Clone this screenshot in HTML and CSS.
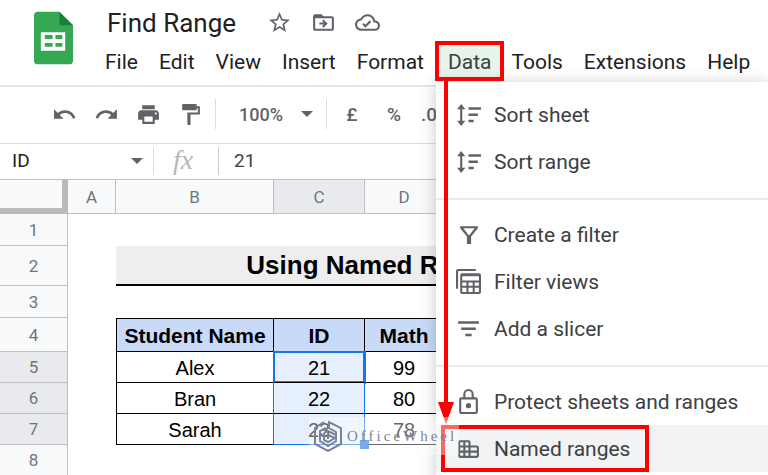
FILE: index.html
```html
<!DOCTYPE html>
<html lang="en">
<head>
    <meta charset="UTF-8">
    <meta name="viewport" content="width=device-width, initial-scale=1.0">
    <title>Find Range</title>
    <link rel="stylesheet" href="styles.css">
</head>
<body>
    <header class="header">
        <svg class="logo" viewBox="0 0 40 54">
            <path fill="#34a853" d="M4 0h22l14 14v36a4 4 0 0 1-4 4H4a4 4 0 0 1-4-4V4a4 4 0 0 1 4-4z"/>
            <path fill="#188038" d="M26 0l14 14H26z"/>
            <path fill="#fff" fill-rule="evenodd" d="M7 21h25v19H7zM11 24v4h8v-4zM22 24v4h7v-4zM11 32v4h8v-4zM22 32v4h7v-4z"/>
        </svg>
        <div class="header-main">
            <div class="title-row">
                <h1 class="doc-title">Find Range</h1>
                <button class="icon-button" aria-label="Star">
                    <svg class="icon" viewBox="0 0 24 24"><path d="M22 9.24l-7.19-.62L12 2 9.19 8.63 2 9.24l5.46 4.73L5.82 21 12 17.27 18.18 21l-1.63-7.03L22 9.24zM12 15.4l-3.76 2.27 1-4.28-3.32-2.88 4.38-.38L12 6.1l1.71 4.04 4.38.38-3.32 2.88 1 4.28L12 15.4z"/></svg>
                </button>
                <button class="icon-button" aria-label="Move">
                    <svg class="icon" viewBox="0 0 24 24"><path d="M20 6h-8l-2-2H4c-1.1 0-2 .9-2 2v12c0 1.1.9 2 2 2h16c1.1 0 2-.9 2-2V8c0-1.1-.9-2-2-2zm0 12H4V8h16v10zm-8-1l4-4-4-4-1.4 1.4 1.6 1.6H8v2h4.200l-1.600 1.600z"/></svg>
                </button>
                <button class="icon-button" aria-label="See document status">
                    <svg class="icon" viewBox="0 0 24 24"><path d="M19.350 10.040C18.670 6.590 15.640 4 12 4 9.110 4 6.600 5.640 5.350 8.040 2.340 8.360 0 10.910 0 14c0 3.310 2.690 6 6 6h13c2.760 0 5-2.240 5-5 0-2.640-2.050-4.780-4.650-4.960zM19 18H6c-2.210 0-4-1.790-4-4 0-2.050 1.530-3.760 3.560-3.970l1.070-.110.5-.950C8.080 7.140 9.940 6 12 6c2.620 0 4.880 1.860 5.390 4.430l.3 1.500 1.530.110c1.560.1 2.780 1.410 2.780 2.960 0 1.650-1.350 3-3 3zm-9-3.820l-1.590-1.590L7 14l3 3 5.500-5.500-1.410-1.410z"/></svg>
                </button>
            </div>
            <nav class="menubar">
                <button class="menu-button">File</button>
                <button class="menu-button">Edit</button>
                <button class="menu-button">View</button>
                <button class="menu-button">Insert</button>
                <button class="menu-button">Format</button>
                <div class="menu-open">
                    <button class="menu-button active">Data</button>
                    <div class="dropdown">
                        <button class="dropdown-item">
                            <svg class="item-icon" viewBox="0 0 24 24"><path d="M5 2L1 7h3v11H1l4 5 4-5H6V7h3zM12 5h12v2.500H12zM12 11h9v2.500h-9zM12 17h5v2.500h-5z"/></svg>
                            Sort sheet
                        </button>
                        <button class="dropdown-item">
                            <svg class="item-icon" viewBox="0 0 24 24"><path d="M5 2L1 7h3v11H1l4 5 4-5H6V7h3zM12 5h12v2.500H12zM12 11h9v2.500h-9zM12 17h5v2.500h-5z"/></svg>
                            Sort range
                        </button>
                        <hr class="dropdown-line">
                        <button class="dropdown-item">
                            <svg class="item-icon" viewBox="0 0 24 24"><path fill-rule="evenodd" d="M4 4h17v2l-6.500 8v7h-4v-7L4 6zM7 6l5.500 7L18 6z"/></svg>
                            Create a filter
                        </button>
                        <button class="dropdown-item">
                            <svg class="item-icon" viewBox="0 0 24 24"><path fill-rule="evenodd" d="M0 2a2 2 0 0 1 2-2h17v2H2v17H0zM4 6a2 2 0 0 1 2-2h16a2 2 0 0 1 2 2v16a2 2 0 0 1-2 2H6a2 2 0 0 1-2-2zM6 7v4h16V7zM6 13v3h4v-3zM12 13v3h4v-3zM18 13v3h4v-3zM6 18v4h4v-4zM12 18v4h4v-4zM18 18v4h4v-4z"/></svg>
                            Filter views
                        </button>
                        <button class="dropdown-item">
                            <svg class="item-icon" viewBox="0 0 24 24"><path d="M2 5h20v2.500H2zM5 11h14v2.500H5zM9 17h6v2.500H9z"/></svg>
                            Add a slicer
                        </button>
                        <hr class="dropdown-line">
                        <button class="dropdown-item">
                            <svg class="item-icon" viewBox="0 0 24 24"><path fill-rule="evenodd" d="M7 8V5a5 5 0 0 1 10 0v3h2a2 2 0 0 1 2 2v12a2 2 0 0 1-2 2H5a2 2 0 0 1-2-2V10a2 2 0 0 1 2-2zM9 8h6V5a3 3 0 0 0-6 0zM5 10v12h14V10z"/><circle cx="12" cy="16" r="2.500"/></svg>
                            Protect sheets and ranges
                        </button>
                        <button class="dropdown-item hover">
                            <svg class="item-icon" viewBox="0 0 24 24"><path fill-rule="evenodd" d="M4 4h8a2 2 0 0 1 2 2v3h6a2 2 0 0 1 2 2v8a2 2 0 0 1-2 2H4a2 2 0 0 1-2-2V6a2 2 0 0 1 2-2zM4 6v3h3V6zM9 6v3h3V6zM4 11v3h3v-3zM9 11v3h3v-3zM14 11v3h6v-3zM4 16v3h3v-3zM9 16v3h3v-3zM14 16v3h6v-3z"/></svg>
                            Named ranges
                        </button>
                        <div class="item-mark"></div>
                    </div>
                    <svg class="arrow" viewBox="0 0 16 344"><path fill="#f00" d="M6 0h4v322h6l-8 22-8-22h6z"/></svg>
                </div>
                <button class="menu-button">Tools</button>
                <button class="menu-button">Extensions</button>
                <button class="menu-button">Help</button>
            </nav>
        </div>
    </header>

    <div class="toolbar">
        <button class="tool" aria-label="Undo"><svg class="icon" viewBox="0 0 24 24"><path d="M12.500 8c-2.650 0-5.050.990-6.900 2.600L2 7v9h9l-3.620-3.620c1.390-1.160 3.160-1.880 5.120-1.880 3.540 0 6.550 2.310 7.600 5.500l2.370-.780C21.080 11.030 17.150 8 12.500 8z"/></svg></button>
        <button class="tool" aria-label="Redo"><svg class="icon" viewBox="0 0 24 24"><path d="M18.400 10.600C16.550 8.990 14.150 8 11.500 8c-4.650 0-8.580 3.030-9.960 7.220L3.900 16c1.050-3.190 4.050-5.500 7.600-5.500 1.950 0 3.730.720 5.120 1.880L13 16h9V7l-3.600 3.600z"/></svg></button>
        <button class="tool" aria-label="Print"><svg class="icon" viewBox="0 0 24 24"><path d="M19 8H5c-1.660 0-3 1.340-3 3v6h4v4h12v-4h4v-6c0-1.660-1.340-3-3-3zm-3 11H8v-5h8v5zm3-7c-.550 0-1-.450-1-1s.450-1 1-1 1 .450 1 1-.450 1-1 1zM18 3H6v4h12V3z"/></svg></button>
        <button class="tool" aria-label="Paint format"><svg class="icon" viewBox="0 0 24 24"><path d="M18 4V3c0-.550-.450-1-1-1H5c-.550 0-1 .450-1 1v4c0 .550.450 1 1 1h12c.550 0 1-.450 1-1V6h1v4H9v11c0 .550.450 1 1 1h2V12h9V4h-3z"/></svg></button>
        <span class="tool-line"></span>
        <button class="zoom">100%<span class="caret"></span></button>
        <span class="tool-line"></span>
        <button class="tool tool-text">£</button>
        <button class="tool tool-text">%</button>
        <button class="tool-text decimal">.0</button>
    </div>

    <div class="formula-bar">
        <button class="name-box">ID<span class="caret"></span></button>
        <span class="fx">fx</span>
        <input class="formula" type="text" value="21" aria-label="Formula">
    </div>

    <main class="sheet">
        <table class="grid">
            <colgroup>
                <col class="col-num"><col class="col-a"><col class="col-b"><col class="col-c"><col class="col-d"><col class="col-e"><col class="col-e"><col>
            </colgroup>
            <tr class="letters">
                <th class="corner"></th><th>A</th><th>B</th><th class="picked">C</th><th>D</th><th></th><th></th><th></th>
            </tr>
            <tr class="row"><th>1</th><td></td><td></td><td></td><td></td></tr>
            <tr class="row-title"><th>2</th><td></td><td class="sheet-title" colspan="5">Using Named Ranges</td></tr>
            <tr class="row"><th>3</th><td></td><td></td><td></td><td></td></tr>
            <tr class="row-head"><th>4</th><td></td><td class="head">Student Name</td><td class="head">ID</td><td class="head">Math</td></tr>
            <tr class="row-data"><th class="picked">5</th><td></td><td class="cell">Alex</td><td class="cell selected current">21</td><td class="cell">99</td></tr>
            <tr class="row-data"><th class="picked">6</th><td></td><td class="cell">Bran</td><td class="cell selected">22</td><td class="cell">80</td></tr>
            <tr class="row-data"><th class="picked">7</th><td></td><td class="cell">Sarah</td><td class="cell selected last">23<span class="handle"></span></td><td class="cell">78</td></tr>
            <tr class="row-data"><th>8</th><td></td><td></td><td></td><td></td></tr>
        </table>
        <div class="watermark">
            <svg class="watermark-logo" viewBox="0 0 28 32" fill="none" stroke="#7b8296" stroke-width="2">
                <path d="M10 2L1 8v16l13 7 13-7V8L15 2v6l7 4v9l-8 5-8-5V11l6-3M10 13l4-2 8 4M10 13v7l4 2 7-4-7-3v4"/>
            </svg>
            <span>OfficeWheel</span>
        </div>
    </main>
</body>
</html>
```
FILE: styles.css
```css
* {
    box-sizing: border-box;
}

body {
    margin: 0;
    font-family: Roboto, Arial, sans-serif;
    color: #202124;
    background: #fff;
    overflow: hidden;
}

button {
    border: none;
    background: none;
    padding: 0;
    margin: 0;
    font-family: inherit;
    color: inherit;
    cursor: pointer;
}

.icon {
    display: block;
    width: 25px;
    height: 25px;
    fill: #5f6368;
}

/* header */
.header {
    display: flex;
    height: 87px;
    padding-left: 34px;
    border-bottom: 2px solid #e4e5e9;
}
.logo {
    width: 39px;
    height: 54px;
    margin-top: 11px;
    flex: none;
}
.header-main {
    margin-left: 22px;
}
.title-row {
    display: flex;
    align-items: center;
    height: 41px;
    padding: 4px 0 0 12px;
}
.doc-title {
    margin: 0 12px 0 0;
    font-size: 26px;
    font-weight: 400;
}
.icon-button {
    margin-left: 19px;
}
.menubar {
    display: flex;
    gap: 1px;
    height: 40px;
}
.menu-button {
    height: 40px;
    padding: 2px 10px 0;
    font-size: 21px;
    white-space: nowrap;
}
.menu-button.active {
    padding: 2px 9px 0;
    border: 4px solid #f00;
    background: #e6f4ea;
    color: #3c4043;
}

/* data menu */
.menu-open {
    position: relative;
    margin-right: -4px;
}
.dropdown {
    position: absolute;
    z-index: 2;
    top: 41px;
    left: 1px;
    width: 332px;
    padding: 9px 0;
    background: #fff;
    box-shadow: 0 2px 14px rgba(60, 64, 67, 0.3);
}
.dropdown-item {
    display: flex;
    align-items: center;
    gap: 13px;
    width: 100%;
    height: 47px;
    padding-left: 20px;
    font-size: 21px;
    color: #3c4043;
    white-space: nowrap;
}
.dropdown-item.hover {
    background: #f1f3f4;
}
.item-icon {
    width: 25px;
    height: 25px;
    fill: #5f6368;
}
.dropdown-line {
    height: 2px;
    margin: 13px 0 11px;
    border: none;
    background: #e8eaed;
}
.item-mark {
    position: absolute;
    bottom: 9px;
    left: 5px;
    width: 208px;
    height: 47px;
    border: 4px solid #f00;
}
.arrow {
    position: absolute;
    z-index: 3;
    top: 39px;
    left: 3px;
    width: 16px;
    height: 344px;
}

/* toolbar */
.toolbar {
    display: flex;
    align-items: center;
    height: 57px;
    padding: 0 0 2px 43px;
    border-bottom: 1px solid #dadce0;
    color: #5f6368;
}
.tool {
    display: flex;
    justify-content: center;
    width: 42px;
}
.tool-line {
    width: 1px;
    height: 30px;
    margin: 0 4px;
    background: #dadce0;
}
.zoom {
    display: flex;
    align-items: center;
    gap: 18px;
    padding: 0 9px 0 19px;
    font-size: 18px;
    font-weight: 500;
}
.caret {
    border: 6px solid transparent;
    border-top-color: #5f6368;
    border-bottom: none;
}
.tool-text {
    font-size: 19px;
    font-weight: 500;
}
.decimal {
    margin-left: 6px;
}

/* formula bar */
.formula-bar {
    display: flex;
    align-items: center;
    height: 35px;
    padding-bottom: 2px;
}
.name-box {
    display: flex;
    align-items: center;
    justify-content: space-between;
    width: 154px;
    height: 28px;
    padding: 0 10px 0 12px;
    border-right: 1px solid #dadce0;
    font-size: 19px;
}
.fx {
    width: 65px;
    height: 28px;
    padding-left: 19px;
    border-right: 1px solid #c8cacd;
    font: italic 28px/26px "Liberation Serif", serif;
    color: #b8b8b8;
}
.formula {
    flex: 1;
    min-width: 0;
    padding: 0 15px;
    border: none;
    outline: none;
    font: 19px Roboto, Arial, sans-serif;
    color: #3c4043;
}

/* sheet */
.sheet {
    position: relative;
}
.grid {
    width: 100%;
    table-layout: fixed;
    border-collapse: separate;
    border-spacing: 0;
}
.col-num {
    width: 68px;
}
.col-a {
    width: 48px;
}
.col-b {
    width: 158px;
}
.col-c {
    width: 91px;
}
.col-d {
    width: 79px;
}
.col-e {
    width: 100px;
}
th, td {
    padding: 0;
    text-align: center;
}
th {
    border-right: 1px solid #c0c0c0;
    border-bottom: 1px solid #c0c0c0;
    background: #f8f9fa;
    color: #70757a;
    font-size: 17px;
    font-weight: 400;
}
.picked {
    background: #e8eaed;
}
.letters {
    height: 35px;
}
.letters th {
    border-top: 1px solid #c0c0c0;
}
.letters .corner {
    border-right: 6px solid #bababa;
    border-bottom: 6px solid #bababa;
}
.row {
    height: 32px;
}
.row-title {
    height: 40px;
}
.row-head {
    height: 34px;
}
.row-data {
    height: 31px;
}
.sheet-title {
    border-bottom: 2px solid #000;
    background: #eee;
    color: #000;
    font: bold 26px "Liberation Sans", Arial, sans-serif;
    white-space: nowrap;
}
.head, .cell {
    padding-top: 2px;
    border-right: 1px solid #000;
    border-bottom: 1px solid #000;
    color: #000;
    font: 20px "Liberation Sans", Arial, sans-serif;
}
.head {
    border-top: 1px solid #000;
    background: #c9daf8;
    font-size: 21px;
    font-weight: bold;
    white-space: nowrap;
}
.head:nth-child(3), .cell:nth-child(3) {
    border-left: 1px solid #000;
}
.selected {
    position: relative;
    border-right-color: #1a73e8;
    background: #e6f0fd;
    box-shadow: -1px 0 #1a73e8;
}
.current {
    box-shadow: 0 0 0 1px #1a73e8, inset 0 0 0 1px #1a73e8;
}
.last {
    border-bottom-color: #1a73e8;
}
.handle {
    position: absolute;
    right: -5px;
    bottom: -5px;
    width: 9px;
    height: 9px;
    background: #1a73e8;
}
.watermark {
    position: absolute;
    z-index: 4;
    top: 238px;
    left: 309px;
    display: flex;
    align-items: center;
    gap: 5px;
    width: 150px;
    height: 38px;
    padding-left: 5px;
    background: rgba(255, 255, 255, 0.4);
    color: #7b8296;
    font: 15px "Liberation Serif", serif;
    letter-spacing: 3px;
}
.watermark-logo {
    width: 28px;
    height: 32px;
    flex: none;
}
```
